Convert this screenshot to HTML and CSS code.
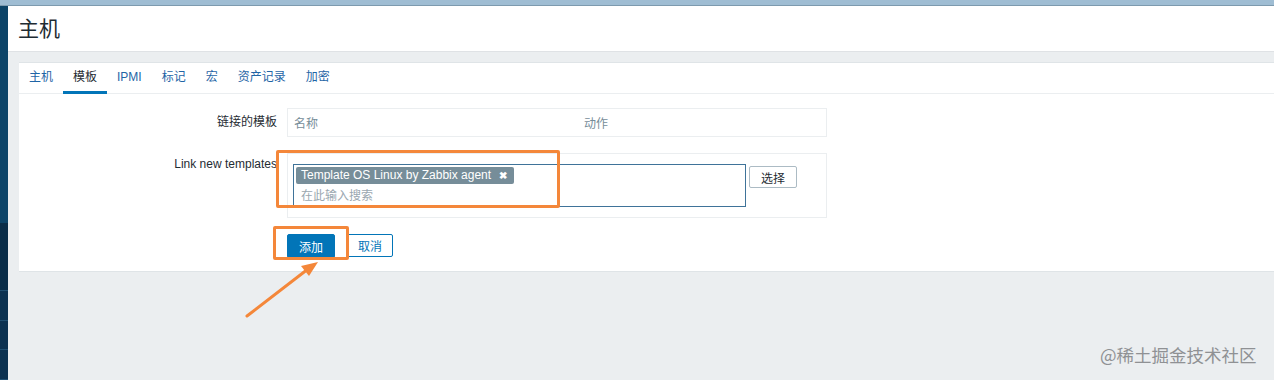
FILE: index.html
```html
<!DOCTYPE html>
<html lang="zh-CN">
<head>
    <meta charset="UTF-8">
    <title>主机</title>
    <link rel="stylesheet" href="styles.css">
</head>
<body>
<div class="topbar"></div>
<div class="layout">
    <div class="sidebar">
        <div class="side-top"></div>
        <div class="side-item dark"></div>
        <div class="side-item"></div>
        <div class="side-item"></div>
        <div class="side-item"></div>
    </div>
    <div class="main">
        <div class="header">
            <h1>主机</h1>
        </div>
        <div class="content">
            <div class="card">
                <ul class="tabs">
                    <li><a href="#">主机</a></li>
                    <li class="active"><a href="#">模板</a></li>
                    <li><a href="#">IPMI</a></li>
                    <li><a href="#">标记</a></li>
                    <li><a href="#">宏</a></li>
                    <li><a href="#">资产记录</a></li>
                    <li><a href="#">加密</a></li>
                </ul>
                <div class="form">
                    <div class="row">
                        <label class="label">链接的模板</label>
                        <div class="field">
                            <div class="linked">
                                <span>名称</span>
                                <span>动作</span>
                            </div>
                        </div>
                    </div>
                    <div class="row">
                        <label class="label">Link new templates</label>
                        <div class="field">
                            <div class="newbox">
                                <div class="multiselect">
                                    <span class="tag">Template OS Linux by Zabbix agent <b>✖</b></span>
                                    <input type="text" placeholder="在此输入搜索">
                                </div>
                                <button class="btn-alt">选择</button>
                            </div>
                        </div>
                    </div>
                    <div class="row">
                        <div class="label"></div>
                        <div class="field buttons">
                            <button class="btn-primary">添加</button>
                            <button class="btn-cancel">取消</button>
                        </div>
                    </div>
                </div>
            </div>
        </div>
    </div>
</div>

<!-- annotation layer -->
<div class="mark mark-select"></div>
<div class="mark mark-add"></div>
<svg class="arrow" width="1274" height="380" viewBox="0 0 1274 380">
    <line x1="247" y1="316" x2="308" y2="269" stroke="#f4873a" stroke-width="3" stroke-linecap="round"/>
    <polygon points="318,262 301,266 309,276" fill="#f4873a"/>
</svg>
<div class="watermark">@稀土掘金技术社区</div>
</body>
</html>
```

FILE: styles.css
```css
body {
    margin: 0;
    padding: 0;
    font-family: "Liberation Sans", Arial, "Noto Sans CJK SC", sans-serif;
    font-size: 12px;
    color: #1f2c33;
    background-color: #ebeef0;
    height: 380px;
    overflow: hidden;
    position: relative;
}
.topbar {
    height: 5px;
    background-color: #9fbdd3;
    border-bottom: 1px solid #7d9aae;
}
.layout {
    display: flex;
}
.sidebar {
    width: 8px;
    flex-shrink: 0;
    height: 374px;
    background-color: #0b3150;
    display: flex;
    flex-direction: column;
}
.side-top {
    height: 228px;
    background-color: #0c4468;
}
.side-item {
    height: 30px;
    border-bottom: 1px solid #1f4e70;
}
.side-item.dark {
    height: 71px;
    background-color: #0a2d48;
}
.main {
    flex-grow: 1;
}
.header {
    height: 41px;
    padding-bottom: 4px;
    background-color: #fff;
    border-bottom: 1px solid #dfe2e5;
    padding-left: 10px;
    display: flex;
    align-items: center;
}
.header h1 {
    margin: 0;
    font-size: 21px;
    font-weight: normal;
    color: #1f2c33;
    font-family: "Noto Sans CJK SC", sans-serif;
}
.content {
    padding: 10px 0 0 11px;
}
.card {
    background-color: #fff;
    border-top: 1px solid #dfe4e7;
    border-bottom: 1px solid #dfe4e7;
    padding-bottom: 13px;
}
.tabs {
    list-style: none;
    margin: 0;
    padding: 0;
    display: flex;
    height: 30px;
    border-bottom: 1px solid #ebeef0;
}
.tabs li {
    padding: 0 10px;
    line-height: 29px;
    border-bottom: 3px solid transparent;
    margin-bottom: -1px;
}
.tabs li a {
    color: #1f65a6;
    text-decoration: none;
}
.tabs li.active {
    border-bottom-color: #0275b8;
}
.tabs li.active a {
    color: #1f2c33;
}
.form {
    padding-top: 14px;
    display: flex;
    flex-direction: column;
    gap: 16px;
}
.row {
    display: flex;
}
.label {
    width: 258px;
    padding-right: 10px;
    text-align: right;
    flex-shrink: 0;
    line-height: 28px;
}
.row:nth-child(2) .label {
    line-height: 22px;
}
.field {
    width: 540px;
}
.linked {
    border: 1px solid #ebeef0;
    height: 27px;
    display: grid;
    grid-template-columns: 290px 1fr;
    align-items: center;
    padding-left: 6px;
    color: #768d99;
}
.newbox {
    border: 1px solid #ebeef0;
    padding: 10px 5px 10px 5px;
    display: flex;
    align-items: flex-start;
    gap: 3px;
}
.multiselect {
    width: 453px;
    border: 1px solid #3f7399;
    padding: 2px 0 0 2px;
    box-sizing: border-box;
    height: 43px;
    display: flex;
    flex-direction: column;
    align-items: flex-start;
}
.tag {
    background-color: #768d99;
    color: #fff;
    height: 17px;
    line-height: 17px;
    padding: 0 7px 0 5px;
    border-radius: 2px;
}
.tag b {
    font-size: 10px;
    margin-left: 5px;
}
.multiselect input {
    border: none;
    outline: none;
    padding: 0 0 0 5px;
    margin-top: 4px;
    font-family: inherit;
    font-size: 12px;
    height: 16px;
}
.multiselect input::placeholder {
    color: #9aa7b0;
}
.btn-alt {
    margin-top: 2px;
    width: 48px;
    height: 22px;
    background-color: #fff;
    border: 1px solid #acbbc4;
    border-radius: 2px;
    color: #1f2c33;
    font-family: inherit;
    font-size: 12px;
    padding: 0;
}
.buttons {
    display: flex;
    gap: 12px;
}
.btn-primary {
    width: 48px;
    height: 24px;
    background-color: #0275b8;
    border: 1px solid #0275b8;
    border-radius: 2px;
    color: #fff;
    font-family: inherit;
    font-size: 12px;
    padding: 0;
}
.btn-cancel {
    width: 46px;
    height: 23px;
    background-color: #fff;
    border: 1px solid #0275b8;
    border-radius: 2px;
    color: #0275b8;
    font-family: inherit;
    font-size: 12px;
    padding: 0;
}
.mark {
    position: absolute;
    border: 3px solid #f4873a;
    border-radius: 2px;
}
.mark-select {
    left: 276px;
    top: 150px;
    width: 278px;
    height: 52px;
}
.mark-add {
    left: 273px;
    top: 226px;
    width: 70px;
    height: 28px;
}
.arrow {
    position: absolute;
    left: 0;
    top: 0;
}
.watermark {
    position: absolute;
    left: 1100px;
    top: 342px;
    font-size: 17.5px;
    color: #8f9194;
    font-family: "Noto Sans CJK SC", sans-serif;
}
```
